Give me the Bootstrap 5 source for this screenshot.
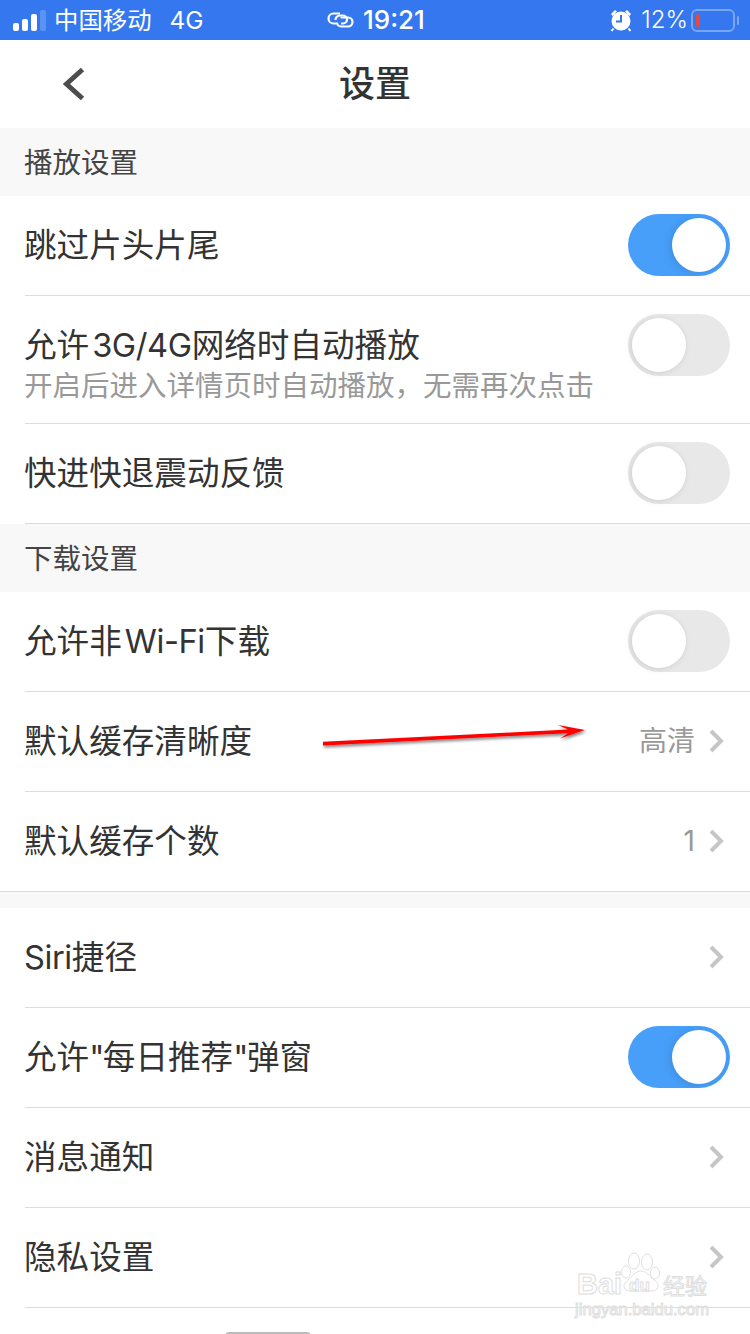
<!DOCTYPE html>
<html lang="zh-CN">
<head>
    <meta charset="UTF-8">
    <title>设置</title>
    <link href="https://cdn.jsdelivr.net/npm/bootstrap@5.3.2/dist/css/bootstrap.min.css" rel="stylesheet">
    <style>
        html, body { height: 1334px; overflow: hidden; }
        body { font-family: "Inter", "Noto Sans CJK SC", sans-serif; color: #333; background: #fff; position: relative; }
        .status-bar { height: 40px; background: #3477ef; color: #fff; font-size: 24.4px; line-height: 40px; padding: 0 11px 0 13px; }
        .signal { width: 33px; height: 22px; gap: 3px; }
        .signal i { width: 6px; background: #fff; border-radius: 2px; display: block; }
        .signal i:nth-child(1) { height: 8px; }
        .signal i:nth-child(2) { height: 12px; }
        .signal i:nth-child(3) { height: 17px; }
        .signal i:nth-child(4) { height: 21px; background: #5b93f3; }
        .carrier { margin-left: 8px; }
        .net { margin-left: 18px; }
        .clock-part { position: absolute; left: 326px; top: 0; height: 40px; font-size: 26px; font-weight: 500; }
        .clock-part span { margin-left: 8px; }
        .pct { margin-left: 9px; font-size: 24px; font-weight: 300; }
        .battery { width: 44px; height: 23px; border: 2px solid #79a5f4; border-radius: 6px; margin-left: 3px; margin-right: 4px; padding: 3px; position: relative; }
        .battery i { display: block; width: 4px; height: 100%; background: #e8473a; border-radius: 2px; }
        .battery::after { content: ""; position: absolute; right: -6px; top: 5px; width: 2px; height: 9px; background: #79a5f4; border-radius: 1px; }
        .app-head { height: 88px; position: relative; }
        .app-head h1 { font-size: 36px; font-weight: 500; margin: 0; line-height: 88px; text-align: center; color: #333; }
        .back-btn { position: absolute; left: 62px; top: 27px; }
        .group-label { height: 68px; background: #f8f8f8; font-size: 28.5px; line-height: 70px; padding-left: 24px; color: #444; }
        .set-row { height: 100px; padding: 0 20px 2px 24px; position: relative; font-size: 32.6px; color: #333; }
        .set-row::after { content: ""; position: absolute; left: 25px; right: 0; bottom: 0; height: 1px; background: #dcdcdc; }
        .set-row.tall { height: 128px; padding-bottom: 0; }
        .set-row.full::after { left: 0; }
        .row-sub { font-size: 28.5px; line-height: 34px; margin-top: 2px; color: #999; white-space: nowrap; }
        .row-main { line-height: 44px; margin-top: 27px; }
        .latin { letter-spacing: -.4px; }
        .qt { letter-spacing: -1.500px; }
        .pill { width: 102px; height: 62px; border-radius: 31px; background: #e8e8e8; position: relative; flex: none; }
        .tall .pill { margin-top: 18px; }
        .pill::after { content: ""; position: absolute; left: 4px; top: 4px; width: 54px; height: 54px; border-radius: 50%; background: #fff; box-shadow: -1px 1px 6px rgba(0,0,0,.12); }
        .pill.on { background: #479ffa; }
        .pill.on::after { left: 44px; box-shadow: -2px 1px 8px rgba(0,0,0,.12); }
        .row-val { font-size: 28px; color: #999; margin-right: 14px; }
        .chev { margin-right: 5px; }
        .gap-band { height: 16px; background: #f8f8f8; }
        .red-arrow { position: absolute; left: 320px; top: 720px; }
        .home-bit { position: absolute; left: 225px; top: 1332px; width: 86px; height: 4px; background: #bbb; border-radius: 4px 4px 0 0; }
        .watermark { position: absolute; left: 574px; top: 1250px; width: 140px; height: 72px; }
        .wm-text { font-family: "Liberation Sans", "Noto Sans CJK SC", sans-serif; fill: #fff; stroke: #dedede; stroke-width: 1; }
    </style>
</head>
<body>

<div class="status-bar d-flex align-items-center">
    <div class="signal d-flex align-items-end"><i></i><i></i><i></i><i></i></div>
    <span class="carrier">中国移动</span>
    <span class="net">4G</span>
    <div class="clock-part d-flex align-items-center">
        <svg width="29" height="18" viewBox="0 0 29 18" fill="none" stroke="#fff" stroke-width="2.200">
            <path d="M14 2.500H7.500a5 5 0 0 0 0 10H10"/>
            <path d="M9.500 9a4.500 4.500 0 0 1 4.500-4.500h3a4 4 0 0 1 0 8h-2"/>
            <path d="M14.500 6.500H22a4.500 4.500 0 0 1 0 9h-7a4 4 0 0 1-4-4"/>
        </svg>
        <span>19:21</span>
    </div>
    <div class="ms-auto d-flex align-items-center">
        <svg width="22" height="24" viewBox="0 0 22 24">
            <circle cx="11" cy="13" r="9.500" fill="#fff"/>
            <path d="M1 6l4-4 2 1.500-4.500 4.500zM21 6l-4-4-2 1.500 4.500 4.500z" fill="#fff"/>
            <path d="M11 7v6.500H6" fill="none" stroke="#3477ef" stroke-width="2"/>
            <path d="M3.500 20.500l-2 2.500M18.500 20.500l2 2.500" stroke="#fff" stroke-width="2"/>
        </svg>
        <span class="pct">12%</span>
        <div class="battery"><i></i></div>
    </div>
</div>

<header class="app-head">
    <svg class="back-btn" width="24" height="34" viewBox="0 0 24 34" fill="none" stroke="#4d4d4d" stroke-width="5"><path d="M20.500 2.500L4.500 17l16 14.500"/></svg>
    <h1>设置</h1>
</header>

<div class="group-label">播放设置</div>
<div class="set-row d-flex align-items-center justify-content-between">
    <span>跳过片头片尾</span><span class="pill on"></span>
</div>
<div class="set-row tall d-flex align-items-start justify-content-between">
    <div>
        <div class="row-main">允许&#8202;<span class="latin">3G/4G</span>网络时自动播放</div>
        <div class="row-sub">开启后进入详情页时自动播放，无需再次点击</div>
    </div>
    <span class="pill"></span>
</div>
<div class="set-row d-flex align-items-center justify-content-between">
    <span>快进快退震动反馈</span><span class="pill"></span>
</div>

<div class="group-label">下载设置</div>
<div class="set-row d-flex align-items-center justify-content-between">
    <span>允许非&#8202;<span class="latin">Wi-Fi</span>下载</span><span class="pill"></span>
</div>
<div class="set-row d-flex align-items-center justify-content-between">
    <span>默认缓存清晰度</span>
    <div class="d-flex align-items-center"><span class="row-val">高清</span>
        <svg class="chev" width="16" height="24" viewBox="0 0 16 24" fill="none" stroke="#c6c6c6" stroke-width="4"><path d="M2 2l10 10L2 22"/></svg></div>
</div>
<div class="set-row full d-flex align-items-center justify-content-between">
    <span>默认缓存个数</span>
    <div class="d-flex align-items-center"><span class="row-val">1</span>
        <svg class="chev" width="16" height="24" viewBox="0 0 16 24" fill="none" stroke="#c6c6c6" stroke-width="4"><path d="M2 2l10 10L2 22"/></svg></div>
</div>
<div class="gap-band"></div>
<div class="set-row d-flex align-items-center justify-content-between">
    <span><span class="latin">Siri</span>捷径</span>
    <svg class="chev" width="16" height="24" viewBox="0 0 16 24" fill="none" stroke="#c6c6c6" stroke-width="4"><path d="M2 2l10 10L2 22"/></svg>
</div>
<div class="set-row d-flex align-items-center justify-content-between">
    <span>允许<span class="qt">"</span>每日推荐<span class="qt">"</span>弹窗</span><span class="pill on"></span>
</div>
<div class="set-row d-flex align-items-center justify-content-between">
    <span>消息通知</span>
    <svg class="chev" width="16" height="24" viewBox="0 0 16 24" fill="none" stroke="#c6c6c6" stroke-width="4"><path d="M2 2l10 10L2 22"/></svg>
</div>
<div class="set-row d-flex align-items-center justify-content-between">
    <span>隐私设置</span>
    <svg class="chev" width="16" height="24" viewBox="0 0 16 24" fill="none" stroke="#c6c6c6" stroke-width="4"><path d="M2 2l10 10L2 22"/></svg>
</div>

<!-- annotation arrow -->
<svg class="red-arrow" width="275" height="32" viewBox="0 0 275 32">
    <defs><filter id="sh" x="-5%" y="-50%" width="110%" height="220%"><feDropShadow dx="1" dy="2" stdDeviation="1.500" flood-color="#000" flood-opacity=".5"/></filter></defs>
    <path d="M3 21.800L248 9.600 238 5 265 10 240 18.500 248 13.200 3 25.400z" fill="#f00" filter="url(#sh)"/>
</svg>

<!-- watermark -->
<svg class="watermark" viewBox="0 0 140 72">
    <g fill="#fff" stroke="#e0e0e0" stroke-width="1">
        <ellipse cx="60" cy="11" rx="5.500" ry="8"/>
        <ellipse cx="73" cy="12" rx="5.500" ry="8"/>
        <ellipse cx="52" cy="22" rx="4.500" ry="6"/>
        <ellipse cx="81" cy="23" rx="4.500" ry="6"/>
        <path d="M67 21c-6 0-8 5-13 9-4 3-5 6-3 9 3 3 9 2 16 2s13 1 16-2c2-3 1-6-3-9-5-4-7-9-13-9z"/>
    </g>
    <text class="wm-text" x="3" y="44" font-size="29" font-weight="700" textLength="45" lengthAdjust="spacingAndGlyphs">Bai</text>
    <text class="wm-text" x="55" y="41" font-size="17" font-weight="700">du</text>
    <text class="wm-text" x="89" y="44" font-size="22">经验</text>
    <text class="wm-text" x="1" y="65" font-size="17" textLength="134" lengthAdjust="spacingAndGlyphs">jingyan.baidu.com</text>
</svg>

<div class="home-bit"></div>

<script src="https://cdn.jsdelivr.net/npm/bootstrap@5.3.2/dist/js/bootstrap.bundle.min.js"></script>
</body>
</html>
